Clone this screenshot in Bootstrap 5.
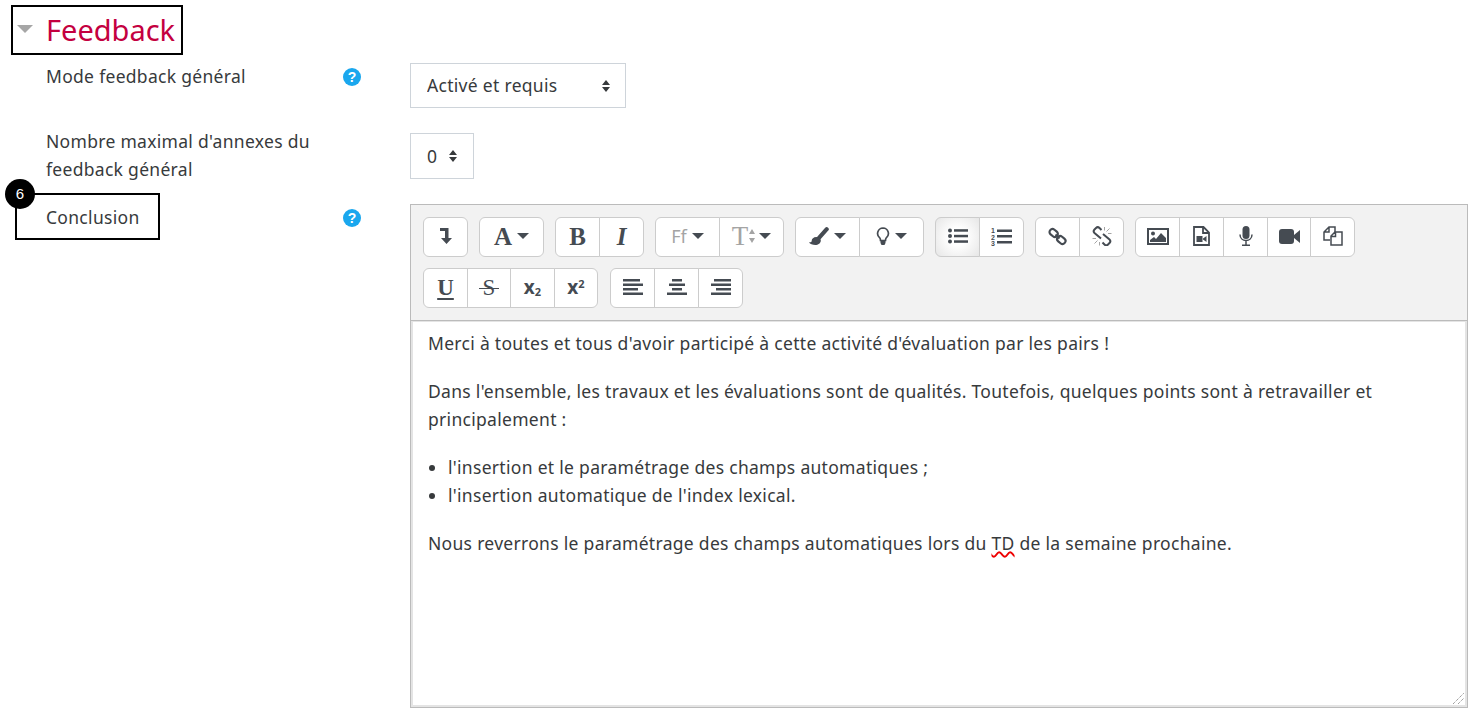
<!DOCTYPE html>
<html lang="fr">
<head>
<meta charset="utf-8">
<title>Feedback</title>
<link rel="stylesheet" href="https://cdn.jsdelivr.net/npm/bootstrap@5.3.0/dist/css/bootstrap.min.css">
<style>
html,body{height:719px;overflow:hidden}
body{font-family:"Noto Sans","Open Sans",sans-serif;font-size:17.5px;letter-spacing:.3px;line-height:28px;color:#373a3c;background:#fff;padding:5px 11px 0 11px}
.fb-head{width:172px;height:50px;border:2px solid #000;padding-left:4px;gap:13px;margin-bottom:8px}
.fb-caret{width:0;height:0;border-left:8px solid transparent;border-right:8px solid transparent;border-top:8px solid #a6a6a6;margin-top:-3px}
.fb-title{font-size:29px;line-height:46px;letter-spacing:0;color:#c40040;font-weight:400;margin:0}
.fb-lab{width:399px;padding-left:35px;position:relative;flex:none;display:flex}
.fb-txt{width:297px;flex:none;margin-top:-1px}
.fb-txt-two{margin-top:-6px;padding-right:30px}
.fb-help{width:18px;height:18px;margin-top:5px;border-radius:50%;background:#1aa7ee;color:#fff;font:700 14px/18px "Liberation Sans",sans-serif;letter-spacing:0;text-align:center;flex:none}
.form-select.fb-sel{border:1px solid #ced4da;border-radius:0;color:#373a3c;font-size:17.5px;letter-spacing:.3px;line-height:28px;padding:0 16px;margin-bottom:25px;background-size:10px 14px;background-position:right 14px center;background-image:url("data:image/svg+xml,%3Csvg xmlns='http://www.w3.org/2000/svg' viewBox='0 0 10 14'%3E%3Cpath d='M5 1l4 5H1zM5 13L1 8h8z' fill='%23373a3c'/%3E%3C/svg%3E")}
.form-select.fb-sel-wide{width:216px;height:45px;padding-bottom:2px}
.form-select.fb-sel-num{width:64px;height:46px;background-position:right 15px center}
.fb-concl{position:absolute;left:4px;top:-11px;width:145px;height:47px;border:2px solid #000;pointer-events:none}
.fb-num{position:absolute;left:-12px;top:-16px;width:30px;height:30px;background:#000;border-radius:50%;color:#fff;font:15px/29px "Liberation Sans",sans-serif;letter-spacing:0;text-align:center}
.fb-editor{width:1058px;height:504px;border:1px solid #bbb;display:flex;flex-direction:column}
.fb-tools{background:#f2f2f2;height:116px;padding:12px 0 0 12px;border-bottom:1px solid #bbb;flex:none}
.fb-line{display:flex;gap:11px;height:40px;margin-bottom:11px}
.fb-gap{margin-left:1px}
.btn.fb-b{height:40px;padding:0 0 2px;display:flex;align-items:center;justify-content:center;gap:5px;flex:none;background:#fff;border:1px solid #ccc;color:#454b52;font:700 25px/1 "Liberation Serif",serif;letter-spacing:0}
.fb-w44{width:44px}.fb-w45{width:45px}.fb-w65{width:65px}
.btn.fb-act{background:radial-gradient(circle,#fff 30%,#e6e6e6 100%)}
.btn.fb-muted{color:#a4a4a4;font-weight:400}
.btn.fb-ff{font:400 18px/1 "Noto Sans",sans-serif}
.btn.fb-tt{gap:1px}
.fb-big{font-size:27px}
.fb-tt .fb-car{margin-left:3px}
.fb-car{width:0;height:0;border-left:6px solid transparent;border-right:6px solid transparent;border-top:6px solid #454b52;flex:none}
.btn.fb-sm{font:700 19px/1 "Open Sans",sans-serif}
.fb-sm sub,.fb-sm sup{font-size:11px}
.btn.fb-u{font-size:23px;text-decoration:underline;text-underline-offset:3px}
.btn.fb-st{font-size:23px;font-weight:400}
.fb-st span{position:relative}
.fb-st span::after{content:"";position:absolute;left:-4px;right:-4px;top:12px;height:1px;background:#454b52}
.fb-body{flex:1;border:2px solid #e4e4e4;border-top:1px solid #e4e4e4;padding:7px 15px 0 15px;position:relative}
.fb-body p{margin:0 0 20px}
.fb-body ul{margin:0 0 20px;padding-left:20px}
.fb-wavy{text-decoration:underline wavy #e00;text-decoration-thickness:1.5px}
.fb-grip{position:absolute;right:1px;bottom:1px}
.fb-ico{fill:#454b52}
.fb-line-i{fill:none;stroke:#454b52}
.fb-digits{font:700 7px "Liberation Sans",sans-serif;fill:#454b52}
</style>
</head>
<body>
<div class="fb-head d-flex align-items-center">
  <span class="fb-caret"></span>
  <h3 class="fb-title">Feedback</h3>
</div>
<div class="d-flex">
  <div class="fb-lab"><div class="fb-txt">Mode feedback général</div><span class="fb-help">?</span></div>
  <select class="form-select fb-sel fb-sel-wide"><option>Activé et requis</option></select>
</div>
<div class="d-flex">
  <div class="fb-lab"><div class="fb-txt fb-txt-two">Nombre maximal d'annexes du feedback général</div></div>
  <select class="form-select fb-sel fb-sel-num"><option>0</option></select>
</div>
<div class="d-flex">
  <div class="fb-lab"><div class="fb-txt">Conclusion</div><span class="fb-help">?</span>
    <div class="fb-concl"><span class="fb-num">6</span></div></div>
  <div class="fb-editor">
    <div class="fb-tools">
      <div class="fb-line">
        <div class="btn-group"><span class="btn fb-b fb-w45"><svg class="fb-ico" width="12" height="16" viewBox="0 0 12 16"><path d="M0 0h8.500v10H12l-5.500 6L1 10h4V3H0z"/></svg></span></div>
        <div class="btn-group"><span class="btn fb-b fb-w65">A<i class="fb-car"></i></span></div>
        <div class="btn-group"><span class="btn fb-b fb-w45">B</span><span class="btn fb-b fb-w45 fst-italic">I</span></div>
        <div class="btn-group"><span class="btn fb-b fb-muted fb-ff fb-w65">Ff<i class="fb-car"></i></span><span class="btn fb-b fb-muted fb-tt fb-w65"><span class="fb-big">T</span><svg width="6" height="14" viewBox="0 0 6 14"><path d="M3 0l3 5H0zM3 14L0 9h6z" fill="#a4a4a4"/></svg><i class="fb-car"></i></span></div>
        <div class="btn-group"><span class="btn fb-b fb-w65"><svg width="20" height="20" viewBox="0 0 22 20"><path class="fb-line-i" d="M19.500 2.500L11 12" stroke-width="4.500" stroke-linecap="round"/><path class="fb-ico" d="M8 11c3 0 5 2 5 4 0 3-3 5-6 5-3 0-6-1-7-3 3 0 3-1 3-2 0-2 2-4 5-4z"/></svg><i class="fb-car"></i></span><span class="btn fb-b fb-w65"><svg width="14" height="18" viewBox="0 0 14 18"><path class="fb-line-i" d="M7 1a5.500 5.500 0 0 0-3.300 9.800c.7.800.8 1.600.8 2.700h5c0-1.100.1-1.900.8-2.700A5.500 5.500 0 0 0 7 1z" stroke-width="1.700"/><path class="fb-ico" d="M4.500 13.500h5V16l-1 2h-3l-1-2z"/></svg><i class="fb-car"></i></span></div>
        <div class="btn-group"><span class="btn fb-b fb-act fb-w45"><svg class="fb-ico" width="20" height="16" viewBox="0 0 20 16"><circle cx="2" cy="2.500" r="2"/><circle cx="2" cy="8" r="2"/><circle cx="2" cy="13.500" r="2"/><rect x="6" y="1.200" width="14" height="2.500"/><rect x="6" y="6.800" width="14" height="2.500"/><rect x="6" y="12.300" width="14" height="2.500"/></svg></span><span class="btn fb-b fb-w45"><svg width="21" height="19" viewBox="0 0 21 19"><g class="fb-ico"><rect x="6" y="2.500" width="15" height="2.500"/><rect x="6" y="8" width="15" height="2.500"/><rect x="6" y="14" width="15" height="2.500"/></g><text class="fb-digits" x="0" y="6">1</text><text class="fb-digits" x="0" y="12.500">2</text><text class="fb-digits" x="0" y="19">3</text></svg></span></div>
        <div class="btn-group"><span class="btn fb-b fb-w45"><svg width="19" height="19" viewBox="0 0 19 19"><g class="fb-line-i" stroke-width="2.200"><rect x="1.200" y="3" width="9" height="6" rx="3" transform="rotate(40 5.700 6)"/><rect x="8.800" y="10" width="9" height="6" rx="3" transform="rotate(40 13.300 13)"/><path d="M7.500 7.500l4 4"/></g></svg></span><span class="btn fb-b fb-w45"><svg width="20" height="20" viewBox="0 0 20 20"><g class="fb-line-i" stroke-width="2"><path d="M9.500 4L7.500 2a2.500 2.500 0 0 0-3.500 0L2.500 3.500a2.500 2.500 0 0 0 0 3.500L9 12.500"/><path d="M11 8l6.500 5.500a2.500 2.500 0 0 1 0 3.500L16 18.500a2.500 2.500 0 0 1-3.500 0L10.500 16.500"/></g><path d="M12.500 1v3.500M17.500 2.500l-3 3M19.500 7.500h-3.500M.5 12.500H4M2.500 17.500l3-3M7.500 19.500V16" stroke="#a4a4a4" fill="none"/></svg></span></div>
        <div class="btn-group"><span class="btn fb-b fb-w45"><svg width="22" height="17" viewBox="0 0 22 17"><rect class="fb-line-i" x="1" y="1" width="20" height="15" stroke-width="2"/><circle class="fb-ico" cx="6" cy="5.500" r="2"/><path class="fb-ico" d="M3 14v-2l4-3 2 2 5-6 5 5v4z"/></svg></span><span class="btn fb-b fb-w45"><svg width="17" height="20" viewBox="0 0 17 20"><path class="fb-line-i" d="M1 1h9.500L16 6.500V19H1zM10 1v6h6" stroke-width="1.800"/><path class="fb-ico" d="M3.500 10h6v6h-6zM10 12.500l3.500-2.500v6L10 13.500z"/></svg></span><span class="btn fb-b fb-w45"><svg width="14" height="20" viewBox="0 0 14 20"><rect class="fb-ico" x="3.500" y="0" width="7" height="13" rx="3.500"/><path class="fb-line-i" d="M1 8.500c0 8 12 8 12 0M7 15v4M3 19.200h8" stroke-width="1.500"/></svg></span><span class="btn fb-b fb-w44"><svg width="21" height="15" viewBox="0 0 21 15"><rect class="fb-ico" x="0" y="0" width="15" height="15" rx="3"/><path class="fb-ico" d="M15 6l6-5v13l-6-5z"/></svg></span><span class="btn fb-b fb-w45"><svg width="20" height="20" viewBox="0 0 20 20"><path class="fb-line-i" d="M7 14H1V6l5-5h6v5M6 1v5H1" stroke-width="1.500"/><path class="fb-line-i" d="M8 19V10l4-4h7v13zM12.500 6v4.500H8" stroke-width="1.500"/></svg></span></div>
      </div>
      <div class="fb-line">
        <div class="btn-group"><span class="btn fb-b fb-u fb-w45">U</span><span class="btn fb-b fb-st fb-w44"><span>S</span></span><span class="btn fb-b fb-sm fb-w45"><span>x<sub>2</sub></span></span><span class="btn fb-b fb-sm fb-w44"><span>x<sup>2</sup></span></span></div>
        <div class="btn-group fb-gap"><span class="btn fb-b fb-w45"><svg class="fb-ico" width="20" height="16" viewBox="0 0 20 16"><path d="M0 0h17v2.600H0zM0 4.500h20v2.600H0zM0 9h15v2.600H0zM0 13.400h20V16H0z"/></svg></span><span class="btn fb-b fb-w45"><svg class="fb-ico" width="20" height="16" viewBox="0 0 20 16"><path d="M5 0h10v2.600H5zM2 4.500h16v2.600H2zM5 9h10v2.600H5zM0 13.400h20V16H0z"/></svg></span><span class="btn fb-b fb-w45"><svg class="fb-ico" width="20" height="16" viewBox="0 0 20 16"><path d="M3 0h17v2.600H3zM0 4.500h20v2.600H0zM5 9h15v2.600H5zM0 13.400h20V16H0z"/></svg></span></div>
      </div>
    </div>
    <div class="fb-body">
      <p>Merci à toutes et tous d'avoir participé à cette activité d'évaluation par les pairs !</p>
      <p>Dans l'ensemble, les travaux et les évaluations sont de qualités. Toutefois, quelques points sont à retravailler et principalement :</p>
      <ul><li>l'insertion et le paramétrage des champs automatiques ;</li><li>l'insertion automatique de l'index lexical.</li></ul>
      <p>Nous reverrons le paramétrage des champs automatiques lors du <span class="fb-wavy">TD</span> de la semaine prochaine.</p>
      <svg class="fb-grip" width="11" height="11" viewBox="0 0 11 11"><path d="M0 11L11 0M5 11l6-6" stroke="#777" stroke-dasharray="1 1" fill="none"/></svg>
    </div>
  </div>
</div>
</body>
</html>
